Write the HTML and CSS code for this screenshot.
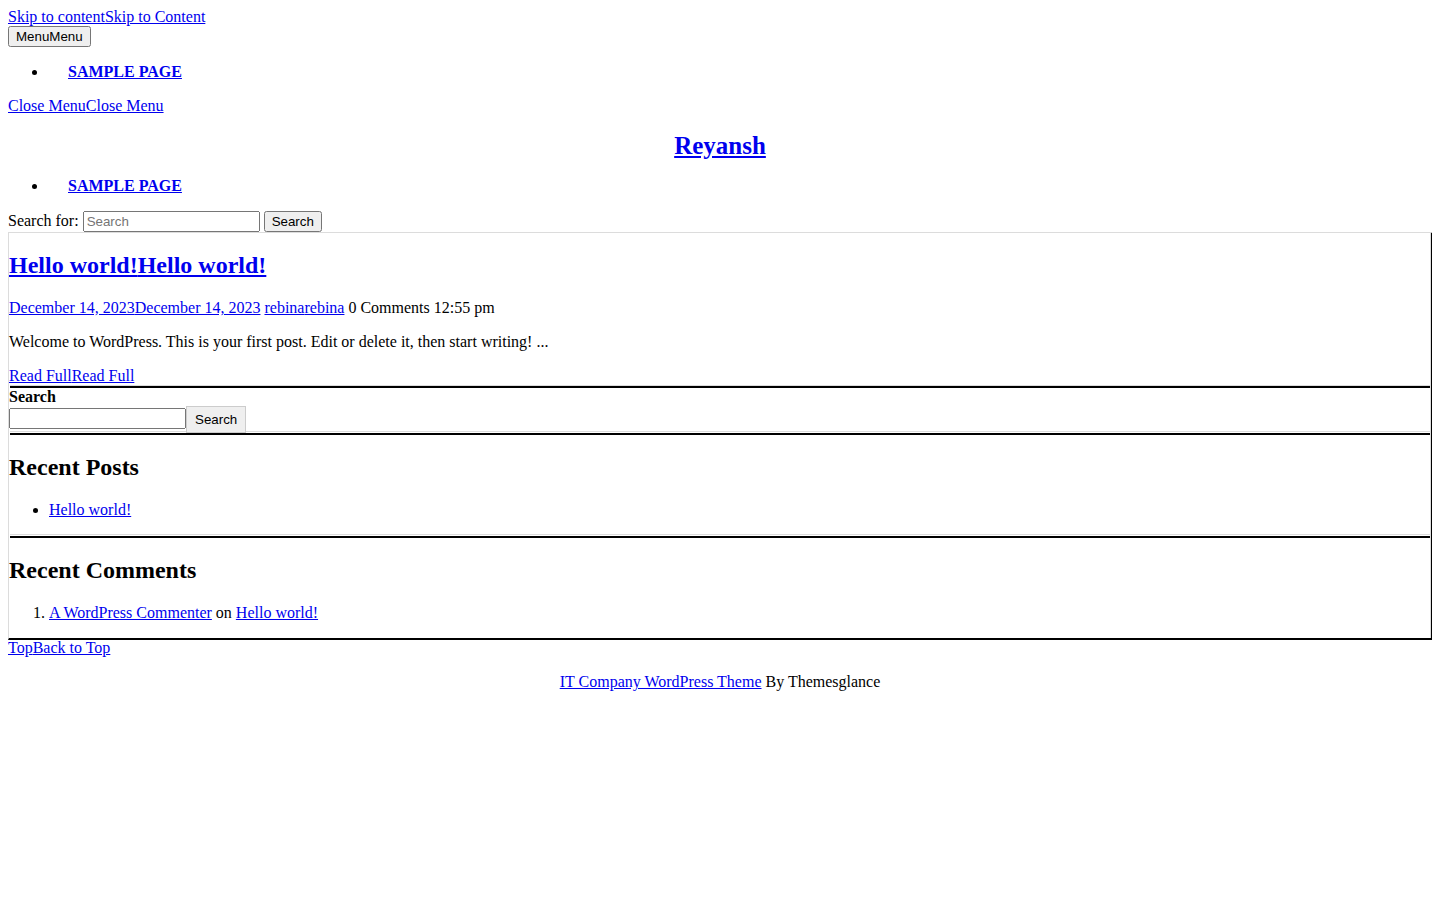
FILE: index.html
```html
<!DOCTYPE html>
<html lang="en">
<head>
<meta charset="utf-8">
<title>Reyansh</title>
<link rel="stylesheet" href="styles.css">
</head>
<body>
<div class="skips"><a href="#">Skip to content</a><a href="#">Skip to Content</a></div>
<div class="toggle"><button class="menu-btn" type="button">MenuMenu</button></div>
<ul class="nav"><li><a class="nav-link" href="#">SAMPLE PAGE</a></li></ul>
<div class="close-row"><a href="#">Close Menu</a><a href="#">Close Menu</a></div>
<h1 class="site-title"><a href="#">Reyansh</a></h1>
<ul class="nav"><li><a class="nav-link" href="#">SAMPLE PAGE</a></li></ul>
<form class="top-search"><label>Search for: <input class="top-input" type="search" placeholder="Search"></label> <button class="top-btn" type="button">Search</button></form>
<div class="box">
  <div class="inner">
    <article class="post">
      <h2 class="post-title"><a href="#">Hello world!</a><a href="#">Hello world!</a></h2>
      <p class="meta"><a href="#">December 14, 2023</a><a href="#">December 14, 2023</a> <a href="#">rebina</a><a href="#">rebina</a> 0 Comments 12:55 pm</p>
      <p class="excerpt">Welcome to WordPress. This is your first post. Edit or delete it, then start writing! ...</p>
      <div class="read"><a href="#">Read Full</a><a href="#">Read Full</a></div>
    </article>
    <div class="sep"></div>
    <section class="widget">
      <div class="widget-label">Search</div>
      <div class="wsearch"><input class="winput" type="search"><button class="wbtn" type="button">Search</button></div>
    </section>
    <div class="sep sep-gap"></div>
    <section class="widget">
      <h2 class="widget-title">Recent Posts</h2>
      <ul class="wlist"><li><a href="#">Hello world!</a></li></ul>
    </section>
    <div class="sep sep-gap sep-pull"></div>
    <section class="widget">
      <h2 class="widget-title">Recent Comments</h2>
      <ol class="wlist"><li><a href="#">A WordPress Commenter</a> on <a href="#">Hello world!</a></li></ol>
    </section>
  </div>
</div>
<div class="top-row"><a href="#">Top</a><a href="#">Back to Top</a></div>
<p class="credit"><a href="#">IT Company WordPress Theme</a> By Themesglance</p>
</body>
</html>
```

FILE: styles.css
```css
html { background: #fff; }
body {
  margin: 8px;
  font-family: "Liberation Serif", "Times New Roman", serif;
  font-size: 16px;
  color: #000;
}
a { color: #0000ee; }

.menu-btn {
  font-family: "Liberation Sans", Arial, sans-serif;
  font-size: 13.333px;
}

.nav {
  margin: 16px 0;
  padding-left: 40px;
}
.nav-link {
  display: inline-block;
  padding-left: 20px;
  font-weight: bold;
  text-transform: uppercase;
}

.site-title {
  margin: 16px 0 17px;
  font-size: 25px;
  font-weight: bold;
  text-align: center;
  line-height: 29px;
}

.top-search { margin: 0; }
.top-input, .top-btn, .winput, .wbtn {
  font-family: "Liberation Sans", Arial, sans-serif;
  font-size: 13.333px;
}
.top-input {
  width: 177px;
  box-sizing: border-box;
}

.box {
  box-sizing: border-box;
  width: calc(100% + 2px);
  border-left: 1px solid #dcdcdc;
  border-top: 1px solid #dcdcdc;
  border-right: 3px solid #000;
  border-bottom: 2px solid #000;
}
.inner {
  border-right: 1px solid #dcdcdc;
  display: flow-root;
}

.post-title {
  font-size: 24px;
  margin: 19px 0 19.92px;
}
.meta, .excerpt { margin: 16px 0; }

.sep {
  margin-left: 1px;
  border-top: 1px solid #dcdcdc;
  border-bottom: 2px solid #000;
}
.sep-gap { padding-top: 1px; }
.sep-pull { margin-top: -1px; }

.widget { display: flow-root; }
.widget-label {
  font-weight: bold;
  line-height: 18px;
}
.wsearch {
  display: flex;
  align-items: center;
  height: 25px;
}
.winput {
  width: 177px;
  box-sizing: border-box;
  height: 21px;
  margin: 0;
}
.wbtn {
  align-self: flex-start;
  padding: 5px 8px;
  border: 1px solid #cccccc;
  background: #efefef;
  border-radius: 0;
  margin: 0;
  color: #000;
  position: relative;
}

.widget-title {
  font-size: 24px;
  margin: 19px 0 20px;
}
.wlist {
  margin: 16px 0;
  padding-left: 40px;
}

.top-row { margin-top: -1px; }
.credit {
  text-align: center;
  margin: 16px 0;
}
```
